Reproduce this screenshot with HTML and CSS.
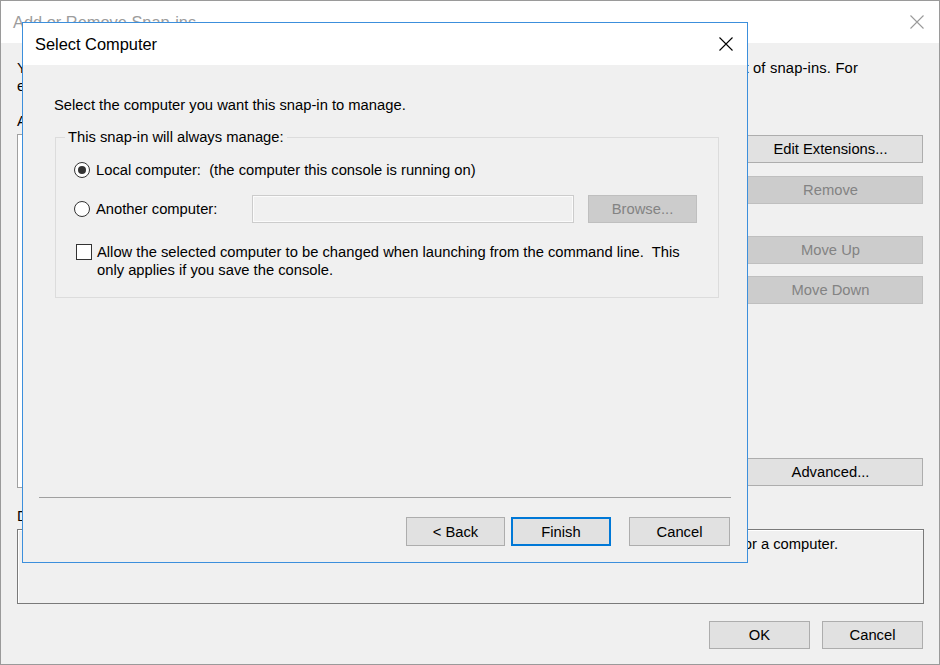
FILE: index.html
```html
<!DOCTYPE html>
<html lang="en">
<head>
<meta charset="utf-8">
<title>Select Computer</title>
<link rel="stylesheet" href="styles.css">
</head>
<body>
<div class="bgwin">
  <div class="bg-title">
    <span class="bg-title-text">Add or Remove Snap-ins</span>
    <svg class="x-icon x-inactive" width="14" height="14" viewBox="0 0 14 14"><path d="M0.5 0.5 L13.5 13.5 M13.5 0.5 L0.5 13.5"/></svg>
  </div>
  <div class="bg-body">
    <p class="bg-intro">
      <span class="intro-l1">You can select snap-ins for this console from those available on your computer and configure the selected set of snap-ins. For</span>
      <span class="intro-l2">extensible snap-ins, you can configure which extensions are enabled.</span>
    </p>
    <div class="bg-main">
      <div class="bg-left">
        <div class="lbl">Available snap-ins:</div>
        <div class="listbox"></div>
      </div>
      <div class="bg-right">
        <button class="btn bg-btn">Edit Extensions...</button>
        <button class="btn bg-btn disabled btn-remove">Remove</button>
        <button class="btn bg-btn disabled btn-up">Move Up</button>
        <button class="btn bg-btn disabled btn-down">Move Down</button>
        <button class="btn bg-btn btn-adv">Advanced...</button>
      </div>
    </div>
    <div class="lbl lbl-desc">Description:</div>
    <div class="descbox"><div class="desc-text">Shows the contents of event logs, lets you filter events and manage subscriptions for a computer.</div></div>
    <div class="bg-footer">
      <button class="btn ok-btn">OK</button>
      <button class="btn ok-btn">Cancel</button>
    </div>
  </div>

  <div class="dlg">
    <div class="dlg-title">
      <span class="dlg-title-text">Select Computer</span>
      <svg class="x-icon" width="14" height="14" viewBox="0 0 14 14"><path d="M0.5 0.5 L13.5 13.5 M13.5 0.5 L0.5 13.5"/></svg>
    </div>
    <div class="dlg-body">
      <p class="dlg-intro">Select the computer you want this snap-in to manage.</p>
      <fieldset class="group">
        <legend class="group-legend">This snap-in will always manage:</legend>
        <div class="opt-row">
          <span class="radio checked"><span class="dot"></span></span>
          <span class="opt-label">Local computer:&nbsp; (the computer this console is running on)</span>
        </div>
        <div class="opt-row row2">
          <span class="radio"></span>
          <span class="opt-label fixed">Another computer:</span>
          <span class="textbox"></span>
          <button class="btn disabled browse">Browse...</button>
        </div>
        <div class="check-row">
          <span class="checkbox"></span>
          <span class="check-label">Allow the selected computer to be changed when launching from the command line.&nbsp; This<br>only applies if you save the console.</span>
        </div>
      </fieldset>
      <div class="separator"></div>
      <div class="dlg-buttons">
        <button class="btn wiz-btn back">&lt; Back</button>
        <button class="btn wiz-btn default">Finish</button>
        <button class="btn wiz-btn cancel">Cancel</button>
      </div>
    </div>
  </div>
</div>
</body>
</html>
```

FILE: styles.css
```css
* { box-sizing: border-box; }
html, body { margin: 0; padding: 0; }
body {
  width: 940px;
  height: 665px;
  overflow: hidden;
  font-family: "Liberation Sans", Arial, sans-serif;
  font-size: 14.75px;
  line-height: 18px;
  color: #000;
  background: #f0f0f0;
}

/* ---------- background window ---------- */
.bgwin {
  position: relative;
  width: 940px;
  height: 665px;
  border: 1px solid #9a9a9a;
  background: #f0f0f0;
  display: flex;
  flex-direction: column;
}
.bg-title {
  flex: none;
  height: 42px;
  background: #fff;
  display: flex;
  align-items: center;
  justify-content: space-between;
  padding: 0 15px 0 12px;
}
.bg-title-text { color: #9c9c9c; font-size: 16.4px; }
.x-icon path { stroke: #000; stroke-width: 1.1; fill: none; }
.x-inactive path { stroke: #9a9a9a; }

.bg-body {
  flex: 1;
  display: flex;
  flex-direction: column;
  padding: 16px 16px 0 16px;
}
.bg-intro { margin: 0; }
.intro-l1 {
  display: block;
  width: 841px;
  white-space: nowrap;
  letter-spacing: 0.15px;
  text-align: justify;
  text-align-last: justify;
}
.intro-l2 { display: block; }

.bg-main {
  display: flex;
  gap: 12px;
  margin-top: 17px;
}
.bg-left { flex: 1; }
.lbl { height: 18px; }
.listbox {
  margin-top: 4px;
  height: 354px;
  background: #fff;
  border: 1px solid #a0a0a0;
}
.bg-right {
  width: 185px;
  display: flex;
  flex-direction: column;
  padding-top: 23px;
  padding-bottom: 2px;
}
.btn {
  font: inherit;
  color: #000;
  background: #e1e1e1;
  border: 1px solid #adadad;
  padding: 0;
  margin: 0;
}
.btn.disabled {
  background: #cccccc;
  border-color: #bfbfbf;
  color: #838383;
}
.bg-btn { height: 28px; width: 185px; }
.btn-remove { margin-top: 13px; }
.btn-up { margin-top: 32px; }
.btn-down { margin-top: 12px; }
.btn-adv { margin-top: auto; }

.lbl-desc { margin-top: 19px; }
.descbox {
  margin-top: 4px;
  margin-right: -1px;
  height: 75px;
  border: 1px solid #7a7a7a;
  box-shadow: inset 1px 1px 0 #fff;
  padding: 5px 85px 0 8px;
  overflow: hidden;
}
.desc-text { white-space: nowrap; text-align: right; }
.bg-footer {
  display: flex;
  justify-content: flex-end;
  gap: 12px;
  margin-top: 17px;
}
.ok-btn { width: 101px; height: 28px; }

/* ---------- foreground dialog ---------- */
.dlg {
  position: absolute;
  left: 21px;
  top: 21px;
  width: 726px;
  height: 541px;
  border: 1px solid #3c8fdc;
  background: #f0f0f0;
  display: flex;
  flex-direction: column;
}
.dlg-title {
  flex: none;
  height: 42px;
  background: #fff;
  display: flex;
  align-items: center;
  justify-content: space-between;
  padding: 0 14px 0 12px;
}
.dlg-title-text { font-size: 16.4px; }
.dlg-body {
  flex: 1;
  display: flex;
  flex-direction: column;
  padding: 31px 16px 16px 16px;
}
.dlg-intro { margin: 0 0 0 15px; }

.group {
  margin: 14px 12px 0 16px;
  border: 1px solid #dcdcdc;
  padding: 10px 0 18px 18px;
  min-width: 0;
}
.group-legend {
  margin-left: -9px;
  padding: 0 3px;
}
.opt-row {
  display: flex;
  align-items: center;
  height: 28px;
}
.row2 { margin-top: 11px; }
.radio {
  flex: none;
  width: 16px;
  height: 16px;
  border: 1px solid #333;
  border-radius: 50%;
  background: #fff;
  display: flex;
  align-items: center;
  justify-content: center;
}
.radio .dot {
  width: 8px;
  height: 8px;
  border-radius: 50%;
  background: #333;
}
.opt-label { margin-left: 6px; white-space: nowrap; }
.opt-label.fixed { width: 156px; }
.textbox {
  width: 322px;
  height: 28px;
  border: 1px solid #cccccc;
  box-shadow: inset 0 0 0 1px #fbfbfb;
  background: #f0f0f0;
}
.browse { width: 109px; height: 28px; margin-left: 14px; }

.check-row {
  display: flex;
  align-items: flex-start;
  margin-top: 20px;
}
.checkbox {
  flex: none;
  width: 16px;
  height: 16px;
  margin: 1px 0 0 2px;
  border: 1px solid #333;
  background: #fff;
}
.check-label { margin-left: 5px; white-space: nowrap; }

.separator {
  margin-top: auto;
  height: 1px;
  background: #a0a0a0;
}
.dlg-buttons {
  display: flex;
  justify-content: flex-end;
  margin-top: 19px;
  margin-right: 1px;
}
.wiz-btn { height: 29px; }
.wiz-btn.back { width: 99px; }
.wiz-btn.default { width: 100px; margin-left: 6px; border: 2px solid #0078d7; }
.wiz-btn.cancel { width: 101px; margin-left: 18px; }
```
